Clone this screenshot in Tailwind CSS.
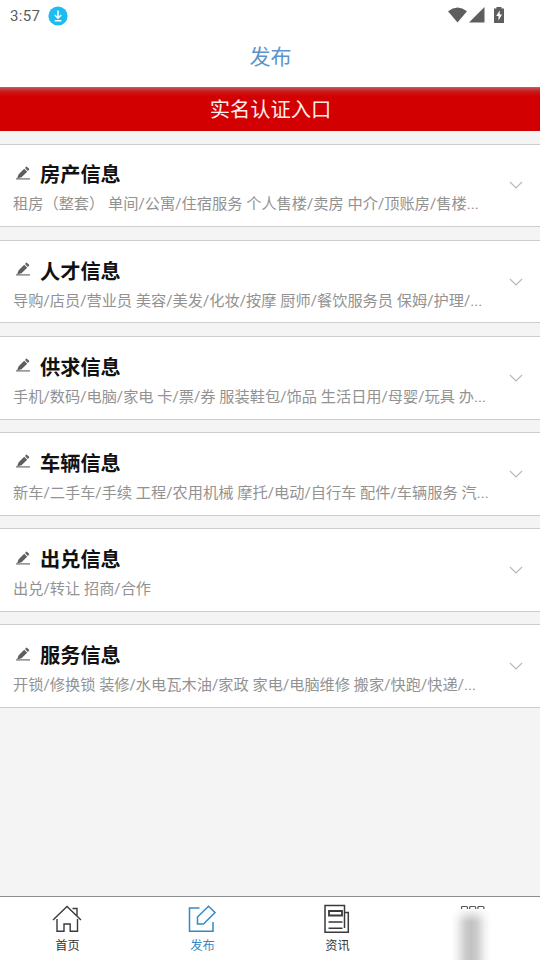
<!DOCTYPE html>
<html lang="zh-CN">
<head>
<meta charset="utf-8">
<title>发布</title>
<script src="https://cdn.jsdelivr.net/npm/@tailwindcss/browser@4"></script>
</head>
<body class="w-[540px] h-[960px] overflow-hidden bg-[#f4f4f4] font-[Roboto,'Noto_Sans_CJK_SC',sans-serif]">
<svg class="hidden">
  <symbol id="pen" viewBox="0 0 16 16"><path d="M2 12.5 3.7 8.2 9.2 2.8 12.2 5.8 6.5 11.3ZM10 2 11.2.8Q11.7.4 12.2.9L14 2.7Q14.5 3.2 14 3.7L12.9 4.9Z" fill="#5e5e61"/><path d="M1 12.9H15" stroke="#77777a" stroke-width="1.3"/></symbol>
  <symbol id="down" viewBox="0 0 14 8"><path d="M1 1 7 7 13 1" fill="none" stroke="#b9b9b9" stroke-width="1.2"/></symbol>
</svg>
<div class="flex flex-col h-full">
  <div class="h-[32px] shrink-0 bg-white flex items-center px-[10px]">
    <span class="text-[15px] leading-[30px] tracking-[0.3px] text-[#5c5c5c]">3:57</span>
    <svg class="ml-[8px] mb-px w-[20px] h-[20px]" viewBox="0 0 20 20"><circle cx="10" cy="10" r="9.6" fill="#1bbcf2"/><path d="M10 4.5V12M6.8 9 10 12.2 13.2 9M6.7 14.7H13.3" fill="none" stroke="#fff" stroke-width="1.5"/></svg>
    <svg class="ml-auto mr-[25px] mb-[3px] w-[58px] h-[18px]" viewBox="447 6 58 18"><path d="M448 11.2Q457.500 4 467 11.200L457.500 22.500Z" fill="#5e5e5e"/><path d="M484.500 7V22.500H469Z" fill="#5e5e5e"/><path d="M494 8.500H496.500V7H501.500V8.500H504V23H494Z" fill="#5e5e5e"/><path d="M499.700 10.500 496.200 16H498.500V20.500L502 14.500H499.700Z" fill="#fff"/></svg>
  </div>
  <div class="h-[55px] shrink-0 bg-white flex items-center justify-center pb-[3px] pl-[1px] text-[21px] text-[#5b94cc]">发布</div>
  <div class="h-[44px] shrink-0 bg-[linear-gradient(to_bottom,#b8696b_0px,#c63b3d_2px,#cb1618_5px,#d20000_9px)] flex items-center justify-center pt-[2px] pl-[1px] text-[20.3px] text-[#ffecec]">实名认证入口</div>
  <main id="list" class="flex-1 pt-[12.700px] flex flex-col gap-[12.670px]"></main>
  <nav class="h-[64px] shrink-0 bg-white border-t border-[#8e8e8e] grid grid-cols-4 text-[12.200px] leading-[16px] text-[#333]">
    <div class="flex flex-col items-center pt-[7px]">
      <svg class="w-[30px] h-[30px] mr-[2px]" viewBox="0 0 30 30" fill="none" stroke="#3a3a3a" stroke-width="1.4"><path d="M1 16 15 2.500 29 16M20.500 4.500H25V11.500M5 15V27.300H12V20H18.200V27.300H25.500V15"/></svg>
      <span class="mt-[4px]">首页</span>
    </div>
    <div class="flex flex-col items-center pt-[7px] text-[#3389c5]">
      <svg class="w-[30px] h-[30px] mr-[2px]" viewBox="0 0 30 30" fill="none" stroke="currentColor" stroke-width="1.500"><path d="M12.500 4H2.500V27.300H26V18M10.500 20V13L21.500 2.300 28 8.500 16.500 20Z"/></svg>
      <span class="mt-[4px]">发布</span>
    </div>
    <div class="flex flex-col items-center pt-[7px]">
      <svg class="w-[30px] h-[30px] mr-[2px]" viewBox="0 0 30 30" fill="none" stroke="#3a3a3a" stroke-width="1.500"><path d="M22.500 24V1.500H3V28.300H26.300V8.500H22.500M6.500 18H20.500M6.500 24.300H20.500"/><path d="M7 7H20V11.500H7Z" stroke-width="1.800"/></svg>
      <span class="mt-[4px]">资讯</span>
    </div>
    <div class="relative overflow-hidden flex justify-center pt-[8px]">
      <div class="absolute left-[46px] top-[11px] w-[40px] h-[53px] bg-[linear-gradient(to_right,transparent,#0000000d_15%,#00000033_36%,#0000003d_50%,#00000033_64%,#0000000d_85%,transparent)] mask-[linear-gradient(to_bottom,transparent,black_14px)]"></div>
      <svg class="relative w-[26px] h-[8px]" viewBox="0 0 26 8" fill="none" stroke="#555" stroke-width="1.200"><path d="M1.500 4V2.500Q1.500 1.500 2.500 1.500H6.500Q7.500 1.500 7.500 2.500V4M9.700 4V2.500Q9.700 1.500 10.700 1.500H14.700Q15.700 1.500 15.700 2.500V4M17.900 4V2.500Q17.900 1.500 18.900 1.500H22.900Q23.900 1.500 23.900 2.500V4"/></svg>
    </div>
  </nav>
</div>
<template id="card">
  <section class="h-[83.500px] shrink-0 bg-white border-y border-[#cdcdcd] flex items-center justify-between pl-[13px] pr-[17px]">
    <div class="pt-[8px]">
      <h2 class="flex items-center text-[20.200px] leading-[30px] font-bold text-[#111]"><svg class="w-[16px] h-[16px] ml-[2px] mr-[9px] mb-[3px]"><use href="#pen"/></svg><span></span></h2>
      <p class="text-[15.220px] leading-[28px] text-[#929292] whitespace-nowrap"></p>
    </div>
    <svg class="w-[14px] h-[8px]"><use href="#down"/></svg>
  </section>
</template>
<script>
const items = [
  ['房产信息', '租房（整套） 单间/公寓/住宿服务 个人售楼/卖房 中介/顶账房/售楼...'],
  ['人才信息', '导购/店员/营业员 美容/美发/化妆/按摩 厨师/餐饮服务员 保姆/护理/...'],
  ['供求信息', '手机/数码/电脑/家电 卡/票/券 服装鞋包/饰品 生活日用/母婴/玩具 办...'],
  ['车辆信息', '新车/二手车/手续 工程/农用机械 摩托/电动/自行车 配件/车辆服务 汽...'],
  ['出兑信息', '出兑/转让 招商/合作'],
  ['服务信息', '开锁/修换锁 装修/水电瓦木油/家政 家电/电脑维修 搬家/快跑/快递/...']
];
for (const [title, desc] of items) {
  const node = document.getElementById('card').content.cloneNode(true);
  node.querySelector('span').textContent = title;
  node.querySelector('p').textContent = desc;
  document.getElementById('list').append(node);
}
</script>
</body>
</html>
